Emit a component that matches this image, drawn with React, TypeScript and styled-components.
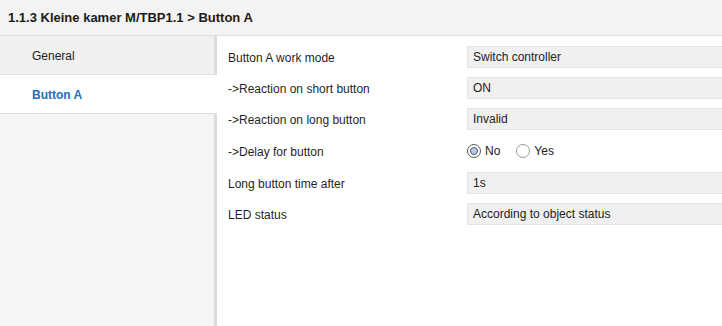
import { createGlobalStyle } from 'styled-components'
import styled, { css } from 'styled-components'

const GlobalStyle = createGlobalStyle`
	html, body {
		margin: 0;
		padding: 0;
		background: #ffffff;
		font-family: 'Liberation Sans', Arial, sans-serif;
		color: #1f1f1f;
		overflow: hidden;
	}
`

type Param =
	| { kind: 'field'; label: string; value: string }
	| { kind: 'radio'; label: string; options: string[]; selected: number }

const params: Param[] = [
	{ kind: 'field', label: 'Button A work mode', value: 'Switch controller' },
	{ kind: 'field', label: '->Reaction on short button', value: 'ON' },
	{ kind: 'field', label: '->Reaction on long button', value: 'Invalid' },
	{ kind: 'radio', label: '->Delay for button', options: ['No', 'Yes'], selected: 0 },
	{ kind: 'field', label: 'Long button time after', value: '1s' },
	{ kind: 'field', label: 'LED status', value: 'According to object status' },
]

const Page = styled.div`
	width: 722px;
	height: 326px;
	display: flex;
	flex-direction: column;
	overflow: hidden;
`

const Header = styled.header`
	height: 35px;
	flex-shrink: 0;
	display: flex;
	align-items: center;
	padding-left: 8px;
	background: #f3f3f3;
	border-bottom: 1px solid #e0e0e0;
	font-size: 13px;
	font-weight: 700;
	color: #1a1a1a;
`

const Body = styled.div`
	flex: 1;
	display: flex;
	min-height: 0;
`

const Sidebar = styled.nav`
	width: 217px;
	flex-shrink: 0;
	display: flex;
	flex-direction: column;
`

const NavItem = styled.div<{ $active?: boolean }>`
	height: 38px;
	box-sizing: border-box;
	display: flex;
	align-items: center;
	padding: 2px 0 0 32px;
	border-bottom: 1px solid #e0e0e0;
	font-size: 12px;
	${({ $active }) =>
		$active
			? css`
					height: 39px;
					background: #ffffff;
					color: #1c6fbd;
					font-weight: 700;
			  `
			: css`
					height: 39px;
					background: #f0f0f0;
					color: #222222;
					border-right: 3px solid #dcdcdc;
			  `}
`

const SidebarFill = styled.div`
	flex: 1;
	background: #f4f5f7;
	border-right: 3px solid #dcdcdc;
`

const Content = styled.main`
	flex: 1;
	padding: 10px 0 0 11px;
	display: grid;
	grid-template-columns: 239px 1fr;
	grid-auto-rows: min-content;
	row-gap: 9px;
	align-items: center;
	font-size: 12px;
`

const Label = styled.div`
	color: #1f1f1f;
	padding-top: 1px;
`

const Field = styled.div`
	height: 22px;
	box-sizing: border-box;
	display: flex;
	align-items: center;
	padding-left: 5px;
	background: #f0f0f0;
	border: 1px solid #e4e4e4;
	border-right: none;
	color: #222222;
`

const RadioGroup = styled.div`
	height: 24px;
	display: flex;
	align-items: center;
	gap: 16px;
`

const RadioOption = styled.label`
	display: flex;
	align-items: center;
	gap: 4px;
	color: #222222;
`

const RadioCircle = styled.span<{ $checked?: boolean }>`
	width: 14px;
	height: 14px;
	box-sizing: border-box;
	border-radius: 50%;
	border: 1px solid ${({ $checked }) => ($checked ? '#5a5a5a' : '#9a9a9a')};
	background: #ffffff;
	display: flex;
	align-items: center;
	justify-content: center;
	&::after {
		content: '';
		display: ${({ $checked }) => ($checked ? 'block' : 'none')};
		width: 8px;
		height: 8px;
		box-sizing: border-box;
		border-radius: 50%;
		background: #bccbe0;
		border: 1px solid #4a5a74;
	}
`

export default function App() {
	return (
		<Page>
			<GlobalStyle />
			<Header>1.1.3 Kleine kamer M/TBP1.1 &gt; Button A</Header>
			<Body>
				<Sidebar>
					<NavItem>General</NavItem>
					<NavItem $active>Button A</NavItem>
					<SidebarFill />
				</Sidebar>
				<Content>
					{params.map((p) => (
						<>
							<Label key={p.label}>{p.label}</Label>
							{p.kind === 'field' ? (
								<Field key={p.label + 'v'}>{p.value}</Field>
							) : (
								<RadioGroup key={p.label + 'v'}>
									{p.options.map((o, i) => (
										<RadioOption key={o}>
											<RadioCircle $checked={i === p.selected} />
											{o}
										</RadioOption>
									))}
								</RadioGroup>
							)}
						</>
					))}
				</Content>
			</Body>
		</Page>
	)
}
